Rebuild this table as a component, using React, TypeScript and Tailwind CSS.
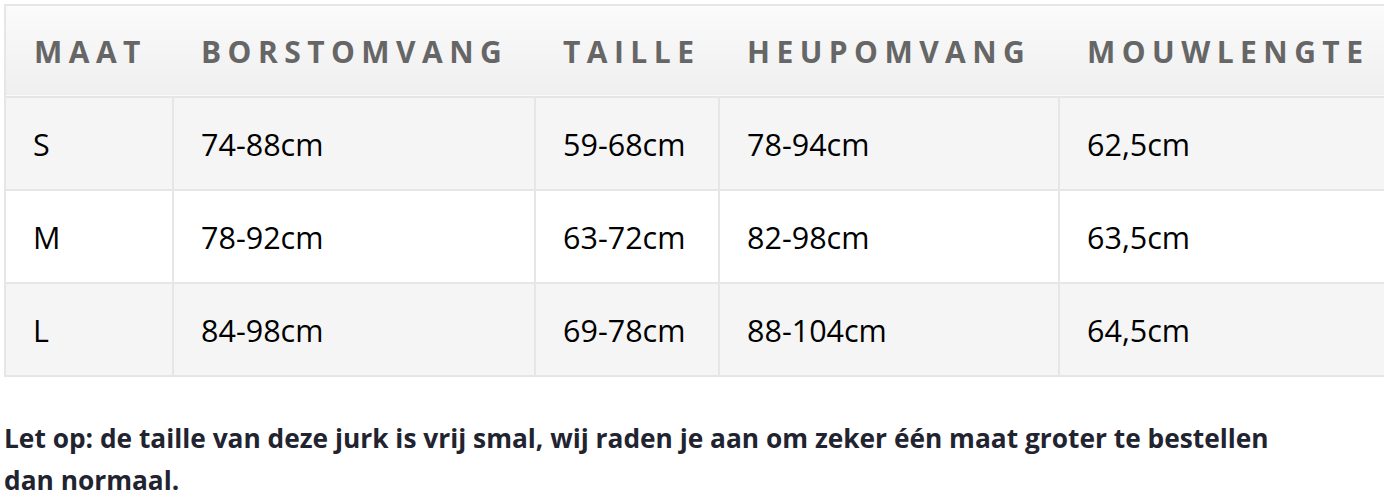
const headers = ["Maat", "Borstomvang", "Taille", "Heupomvang", "Mouwlengte"];

const rows = [
  ["S", "74-88cm", "59-68cm", "78-94cm", "62,5cm"],
  ["M", "78-92cm", "63-72cm", "82-98cm", "63,5cm"],
  ["L", "84-98cm", "69-78cm", "88-104cm", "64,5cm"],
];

const widths = ["w-[168px]", "w-[362px]", "w-[184px]", "w-[340px]", "w-[346px]"];

export default function App() {
  return (
    <div className="min-h-screen overflow-hidden bg-white pl-[4px] pt-[4px] font-['Open_Sans',sans-serif]">
      <table className="w-[1400px] table-fixed border-collapse border-2 border-[#e6e6e6]">
        <colgroup>
          {widths.map((w) => (
            <col key={w} className={w} />
          ))}
        </colgroup>
        <thead>
          <tr className="h-[92px] bg-gradient-to-b from-[#fbfbfb] to-[#efefef] border-b-2 border-[#dddddd]">
            {headers.map((h) => (
              <th
                key={h}
                className="pl-[28px] text-left align-middle text-[30px] font-bold uppercase tracking-[0.215em] text-[#666666]"
              >
                {h}
              </th>
            ))}
          </tr>
        </thead>
        <tbody>
          {rows.map((r, i) => (
            <tr key={r[0]} className={`h-[93px] ${i % 2 === 0 ? "bg-[#f5f5f5]" : "bg-white"}`}>
              {r.map((c, j) => (
                <td
                  key={j}
                  className="border-2 border-[#e6e6e6] pl-[27px] pt-[2px] align-middle text-[30.5px] text-black"
                >
                  {c}
                </td>
              ))}
            </tr>
          ))}
        </tbody>
      </table>
      <p className="mt-[40px] w-[1310px] text-[26.3px] font-bold leading-[42px] text-[#1f2430]">
        Let op: de taille van deze jurk is vrij smal, wij raden je aan om zeker één maat groter te bestellen dan normaal.
      </p>
    </div>
  );
}
